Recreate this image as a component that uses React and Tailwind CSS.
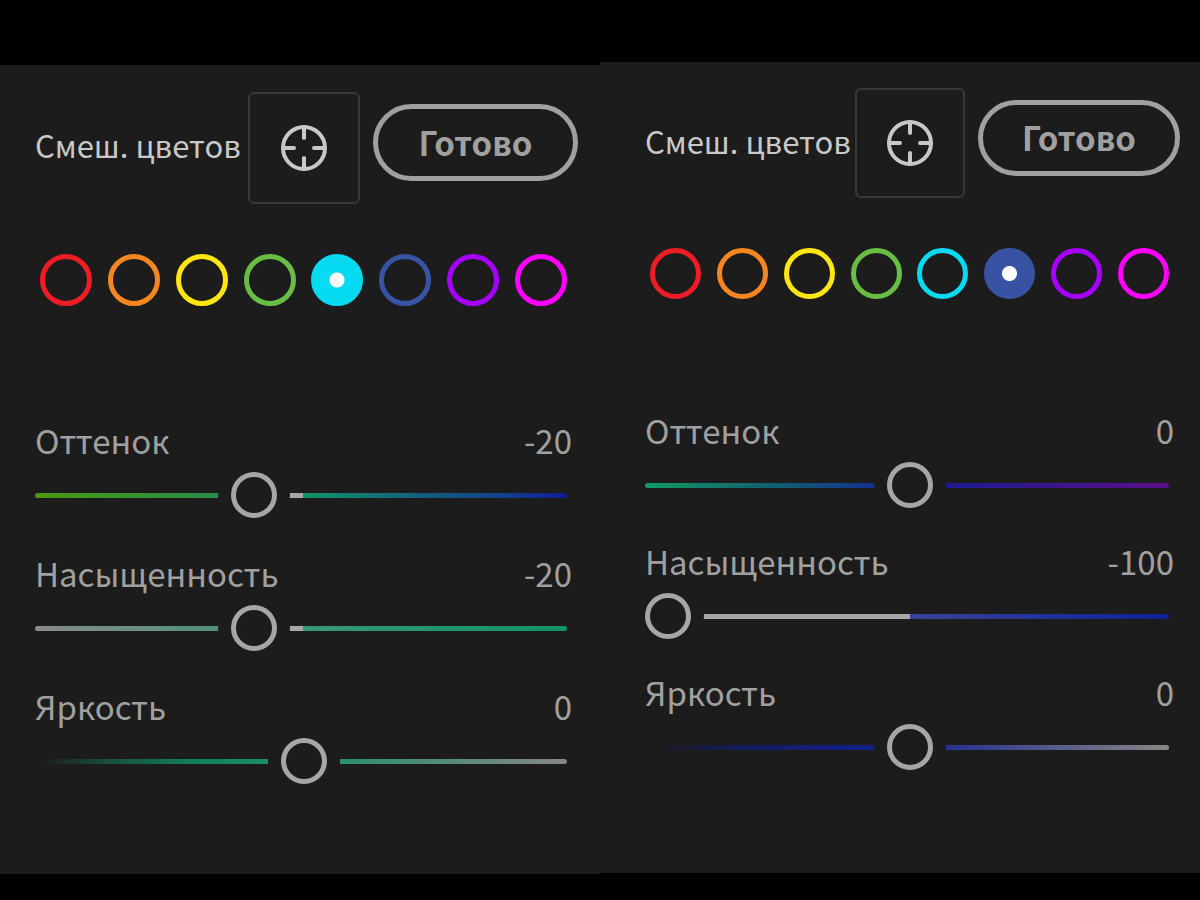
import React, { useId, useState } from 'react';
import clsx from 'clsx';

const SWATCHES = [
  { id: 'red', label: 'Красный', className: 'border-[#ee1d25] checked:bg-[radial-gradient(circle,#fff_7px,#ee1d25_8px)]' },
  { id: 'orange', label: 'Оранжевый', className: 'border-[#f6861f] checked:bg-[radial-gradient(circle,#fff_7px,#f6861f_8px)]' },
  { id: 'yellow', label: 'Желтый', className: 'border-[#ffe60f] checked:bg-[radial-gradient(circle,#fff_7px,#ffe60f_8px)]' },
  { id: 'green', label: 'Зеленый', className: 'border-[#68bd45] checked:bg-[radial-gradient(circle,#fff_7px,#68bd45_8px)]' },
  { id: 'aqua', label: 'Голубой', className: 'border-[#05daf0] checked:bg-[radial-gradient(circle,#fff_7px,#05daf0_8px)]' },
  { id: 'blue', label: 'Синий', className: 'border-[#3953a4] checked:bg-[radial-gradient(circle,#fff_7px,#3953a4_8px)]' },
  { id: 'purple', label: 'Фиолетовый', className: 'border-[#a600ff] checked:bg-[radial-gradient(circle,#fff_7px,#a600ff_8px)]' },
  { id: 'magenta', label: 'Пурпурный', className: 'border-[#ff00ff] checked:bg-[radial-gradient(circle,#fff_7px,#ff00ff_8px)]' },
];

const AQUA_SLIDERS = [
  { label: 'Оттенок', value: -20, track: 'bg-[linear-gradient(90deg,#489a10,#268c4b_35%,#12906a_52%,#12607c_72%,#12418c_88%,#101c90)]' },
  { label: 'Насыщенность', value: -20, track: 'bg-[linear-gradient(90deg,#8a8a8a,#4f917b_35%,#37967a_52%,#0f9266)]' },
  { label: 'Яркость', value: 0, track: 'bg-[linear-gradient(90deg,transparent_1%,#17513c_14%,#12805a_30%,#198c66_44%,#2b8f70_58%,#868686)]' },
];

const BLUE_SLIDERS = [
  { label: 'Оттенок', value: 0, track: 'bg-[linear-gradient(90deg,#109a62,#126070_24%,#12318f_44%,#1c1c90_57%,#5a0f8a)]' },
  { label: 'Насыщенность', value: -100, track: 'bg-[linear-gradient(90deg,#8a8a8a,#3a449a_50%,#0f2094)]' },
  { label: 'Яркость', value: 0, track: 'bg-[linear-gradient(90deg,transparent_2%,#141c60_20%,#12208c_44%,#26308f_57%,#868686)]' },
];

function TargetIcon() {
  return (
    <svg viewBox="0 0 48 48" className="size-12" fill="none" stroke="#c8c8c8" strokeWidth="4" strokeLinecap="round" aria-hidden="true">
      <circle cx="24" cy="24" r="21" />
      <path d="M24 3v11M24 34v11M3 24h11M34 24h11" />
    </svg>
  );
}

function Slider({ label, initial, track }) {
  const id = useId();
  const [value, setValue] = useState(initial);
  const from = Math.min(value, 0);
  const to = Math.max(value, 0);

  return (
    <div>
      <div className="flex justify-between leading-[48px] text-[#a0a0a0]">
        <label htmlFor={id}>{label}</label>
        <output htmlFor={id}>{value}</output>
      </div>
      <div className="mt-2 grid items-center">
        <div className={clsx('[grid-area:1/1] mr-[5px] h-[5px] rounded-full', track)} />
        {/* filled part between the thumb and zero */}
        <div className="[grid-area:1/1] px-[23px]">
          <div
            className="h-[5px] bg-[#a6a6a6]"
            style={{ marginLeft: `${(from + 100) / 2}%`, width: `${(to - from) / 2}%` }}
          />
        </div>
        <input
          id={id}
          type="range"
          min="-100"
          max="100"
          value={value}
          onChange={(e) => setValue(Number(e.target.value))}
          className="[grid-area:1/1] relative m-0 h-[46px] w-full cursor-pointer appearance-none bg-transparent outline-none [&::-webkit-slider-thumb]:size-[46px] [&::-webkit-slider-thumb]:appearance-none [&::-webkit-slider-thumb]:rounded-full [&::-webkit-slider-thumb]:border-[5px] [&::-webkit-slider-thumb]:border-solid [&::-webkit-slider-thumb]:border-[#a6a6a6] [&::-webkit-slider-thumb]:bg-[#1c1c1c] [&::-webkit-slider-thumb]:shadow-[0_0_0_13px_#1c1c1c]"
        />
      </div>
    </div>
  );
}

function MixerPanel({ name, initialColor, sliders, large }) {
  const [color, setColor] = useState(initialColor);

  return (
    <section
      className={clsx(
        "min-w-0 bg-[#1c1c1c] text-[33px] font-['Noto_Sans_CJK_SC','Noto_Sans',sans-serif]",
        large ? 'mt-[3px] pt-[27px] pr-[22px] pb-[90px] pl-[35px]' : 'pt-[26px] pr-5 pb-[103px] pl-[45px]'
      )}
    >
      <header className="flex items-start">
        <h2 className="mt-[29px] flex-1 text-[31px] leading-[48px] whitespace-nowrap text-[#c8c8c8]">Смеш. цветов</h2>
        <button
          type="button"
          aria-label="Выбрать цвет на фото"
          className={clsx(
            'flex shrink-0 items-center justify-center rounded-md border-2 border-[#393939]',
            large ? 'size-[112px]' : 'size-[110px]'
          )}
        >
          <TargetIcon />
        </button>
        <button
          type="button"
          className={clsx(
            'mt-3 ml-[13px] flex shrink-0 items-center justify-center rounded-full border-[5px] border-[#a0a0a0] font-bold text-[#a0a0a0]',
            large ? 'h-[77px] w-[205px]' : 'h-[76px] w-[202px]'
          )}
        >
          Готово
        </button>
      </header>

      <div role="radiogroup" aria-label="Цвет" className="mt-[50px] mr-[11px] ml-[5px] flex justify-between">
        {SWATCHES.map((swatch) => (
          <input
            key={swatch.id}
            type="radio"
            name={name}
            aria-label={swatch.label}
            checked={color === swatch.id}
            onChange={() => setColor(swatch.id)}
            className={clsx(
              'cursor-pointer appearance-none rounded-full border-[5px]',
              large ? 'size-[52px]' : 'size-[51px]',
              swatch.className
            )}
          />
        ))}
      </div>

      <div className={clsx('mr-[6px] flex flex-col', large ? 'mt-[110px] gap-[31px]' : 'mt-[107px] gap-[29px]')}>
        {sliders.map((s) => (
          <Slider key={s.label} label={s.label} initial={s.value} track={s.track} />
        ))}
      </div>
    </section>
  );
}

export default function App() {
  return (
    <main className="grid min-h-screen grid-cols-2 items-start bg-black pt-[62px]">
      <MixerPanel name="mixer-aqua" initialColor="aqua" sliders={AQUA_SLIDERS} large />
      <MixerPanel name="mixer-blue" initialColor="blue" sliders={BLUE_SLIDERS} />
    </main>
  );
}
